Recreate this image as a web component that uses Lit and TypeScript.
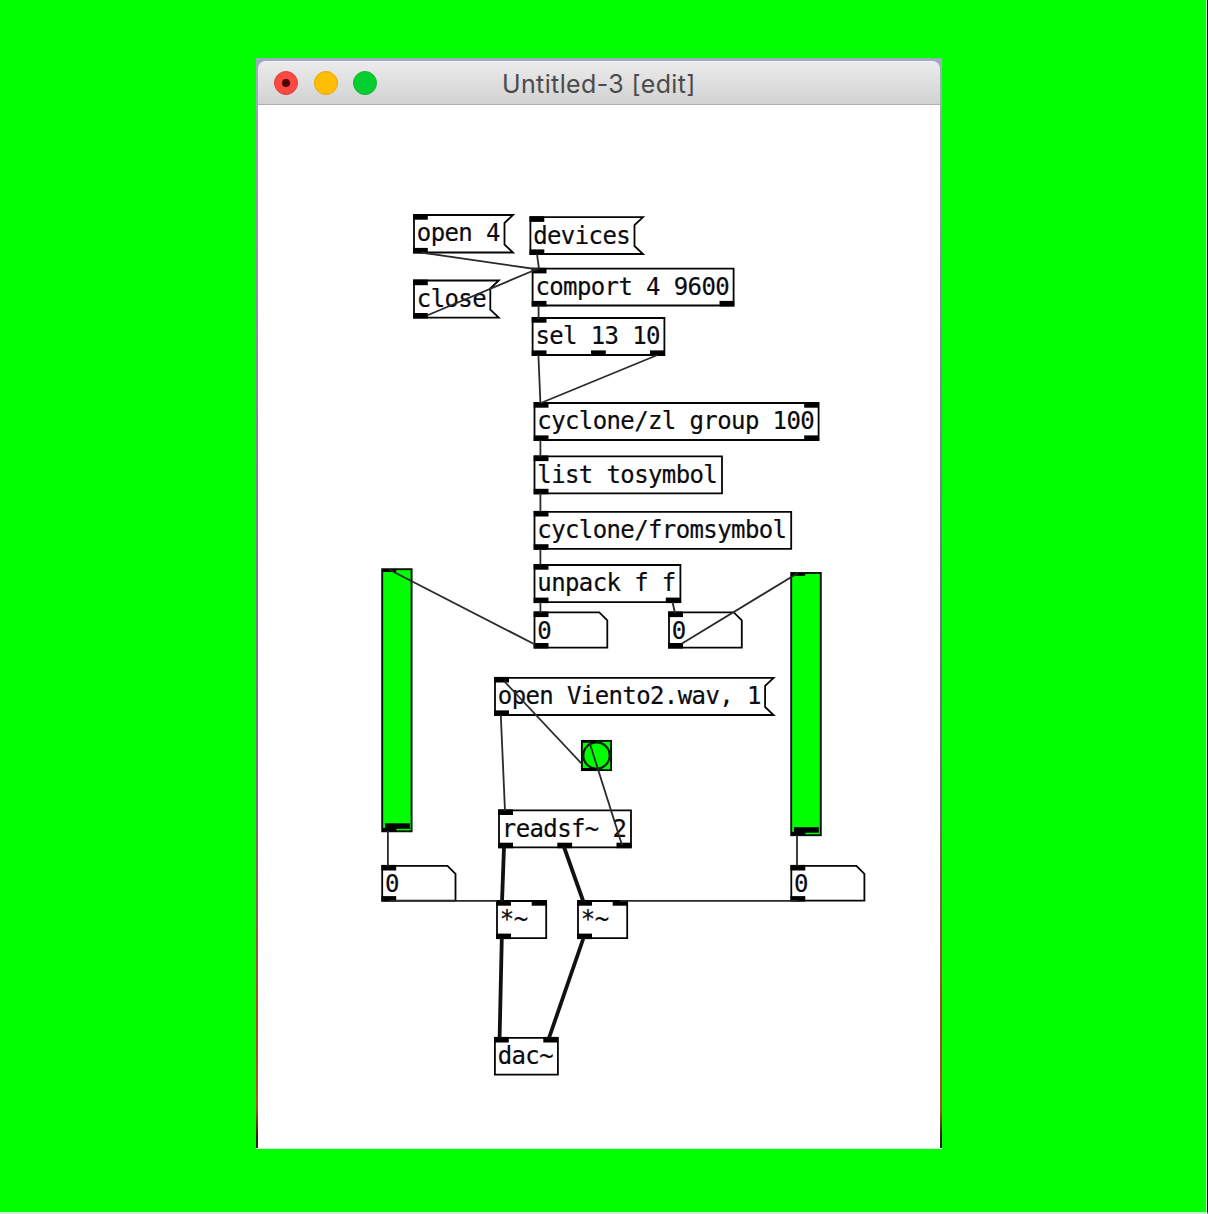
import { LitElement, html, css, svg } from "lit";
import { customElement } from "lit/decorators.js";

type Kind = "object" | "message" | "number";

interface PatchBox {
  kind: Kind;
  text: string;
  x: number;
  y: number;
  right: number;
  bottom: number;
  /** Left edges of the inlets and outlets. */
  inlets: number[];
  outlets: number[];
}

interface Slider {
  x: number;
  y: number;
  right: number;
  bottom: number;
}

type Cord = [number, number, number, number];

const BOXES: PatchBox[] = [
  { kind: "message", text: "open 4", x: 414, y: 215, right: 513, bottom: 252.5, inlets: [413], outlets: [413] },
  { kind: "message", text: "devices", x: 530.4, y: 217.2, right: 643, bottom: 254, inlets: [529.5], outlets: [529.5] },
  { kind: "message", text: "close", x: 414, y: 280.5, right: 498.8, bottom: 317.6, inlets: [413], outlets: [413] },
  { kind: "object", text: "comport 4 9600", x: 532.6, y: 268.7, right: 733.6, bottom: 305.5, inlets: [531.7], outlets: [531.7, 719.5] },
  { kind: "object", text: "sel 13 10", x: 532.6, y: 318, right: 664.4, bottom: 355, inlets: [531.7], outlets: [531.7, 591, 650] },
  { kind: "object", text: "cyclone/zl group 100", x: 534.5, y: 403, right: 818.6, bottom: 440, inlets: [533.7, 804.2], outlets: [533.7, 804.2] },
  { kind: "object", text: "list tosymbol", x: 534.5, y: 456.4, right: 722, bottom: 493.4, inlets: [533.7], outlets: [533.7] },
  { kind: "object", text: "cyclone/fromsymbol", x: 534.5, y: 511.8, right: 791.2, bottom: 548.8, inlets: [533.7], outlets: [533.7] },
  { kind: "object", text: "unpack f f", x: 534.5, y: 565, right: 680.4, bottom: 602.2, inlets: [533.7], outlets: [533.7, 665.8] },
  { kind: "number", text: "0", x: 534.5, y: 612.4, right: 607.3, bottom: 647.6, inlets: [533.7], outlets: [533.7] },
  { kind: "number", text: "0", x: 669, y: 612.4, right: 741.8, bottom: 647.6, inlets: [668.2], outlets: [668.2] },
  { kind: "message", text: "open Viento2.wav, 1", x: 495, y: 677.8, right: 773.6, bottom: 715, inlets: [494.2], outlets: [494.2] },
  { kind: "object", text: "readsf~ 2", x: 499, y: 810.3, right: 631, bottom: 847.3, inlets: [498.2], outlets: [498.2, 557.3, 616.5] },
  { kind: "number", text: "0", x: 382.2, y: 865.8, right: 455.5, bottom: 900.7, inlets: [381.4], outlets: [381.4] },
  { kind: "number", text: "0", x: 791.3, y: 865.8, right: 864.4, bottom: 900.7, inlets: [790.5], outlets: [790.5] },
  { kind: "object", text: "*~", x: 497, y: 901, right: 546.2, bottom: 938.2, inlets: [496.2, 531.7], outlets: [496.2] },
  { kind: "object", text: "*~", x: 578, y: 901, right: 627.2, bottom: 938.2, inlets: [577.2, 612.7], outlets: [577.2] },
  { kind: "object", text: "dac~", x: 494.9, y: 1037.8, right: 557.9, bottom: 1074.6, inlets: [494, 543.3], outlets: [] },
];

const SLIDERS: Slider[] = [
  { x: 382.2, y: 569.2, right: 411.6, bottom: 831.3 },
  { x: 791.2, y: 573, right: 820.8, bottom: 835.2 },
];

const CONTROL_CORDS: Cord[] = [
  [421, 252.5, 538.5, 269.5],
  [537, 254, 539, 269],
  [427, 315.5, 536, 269.5],
  [538.6, 305, 538.6, 319],
  [538.4, 355, 540.4, 403],
  [657.5, 355, 540.8, 403],
  [540.4, 440, 540.4, 457],
  [540.4, 493, 540.4, 512],
  [540.4, 549, 540.4, 565],
  [540.4, 602, 540.4, 613],
  [672.5, 602, 675, 613],
  [535, 644.5, 389, 569.5],
  [682, 643.5, 798, 573],
  [582, 764, 504, 681],
  [500.8, 715, 505, 811],
  [622, 845, 589, 741],
  [387.9, 831, 387.9, 866],
  [797, 835, 797, 866],
  [389, 900.8, 497, 900.8],
  [798, 900.8, 620, 900.8],
];

const SIGNAL_CORDS: Cord[] = [
  [504, 847, 502, 902],
  [564, 847, 583.5, 902],
  [501.8, 938, 499.6, 1038],
  [583.5, 938, 549, 1038],
];

@customElement("patch-canvas")
export class PatchCanvas extends LitElement {
  static styles = css`
    :host {
      display: block;
      background: #fff;
    }
    .patch {
      display: block;
    }
    .outline {
      fill: none;
      stroke: #050505;
      stroke-width: 1.8;
    }
    .port {
      fill: #000;
    }
    .label {
      font-family: "DejaVu Sans Mono", monospace;
      font-size: 24px;
      letter-spacing: -0.61px;
      fill: #0b0b10;
      stroke: #0b0b10;
      stroke-width: 0.2;
      white-space: pre;
    }
    .cord {
      stroke: #2a2a2a;
      stroke-width: 1.8;
    }
    .signal {
      stroke: #111;
      stroke-width: 3.8;
    }
    .green {
      fill: #00ff00;
      stroke: #031003;
      stroke-width: 1.9;
    }
    .ring {
      fill: none;
      stroke: #042004;
      stroke-width: 2.2;
    }
  `;

  private outline(b: PatchBox): string {
    const { x, y, right: r, bottom: d } = b;
    switch (b.kind) {
      case "message":
        return `M${r} ${y}H${x}V${d}H${r}L${r - 8.5} ${d - 8}V${y + 8}Z`;
      case "number":
        return `M${x} ${y}H${r - 8}L${r} ${y + 8}V${d}H${x}Z`;
      default:
        return `M${x} ${y}H${r}V${d}H${x}Z`;
    }
  }

  private box(b: PatchBox) {
    return svg`
      <path class="outline" d=${this.outline(b)} />
      ${b.inlets.map((x) => svg`<rect class="port" x=${x} y=${b.y - 0.9} width="14.8" height="5.6" />`)}
      ${b.outlets.map((x) => svg`<rect class="port" x=${x} y=${b.bottom - 4.6} width="14.8" height="5.5" />`)}
      <text class="label" x=${b.x + 2.8} y=${b.y + 26.4}>${b.text}</text>
    `;
  }

  private slider(s: Slider) {
    return svg`
      <rect class="green" x=${s.x} y=${s.y} width=${s.right - s.x} height=${s.bottom - s.y} />
      <rect class="port" x=${s.x} y=${s.y} width="14" height="2.8" />
      <rect class="port" x=${s.x + 2.8} y=${s.bottom - 8} width="24.8" height="5.5" />
      <rect class="port" x=${s.x} y=${s.bottom - 3.4} width="14.2" height="3.6" />
    `;
  }

  private cords(list: Cord[], name: string) {
    return list.map(([x1, y1, x2, y2]) => svg`<line class=${name} x1=${x1} y1=${y1} x2=${x2} y2=${y2} />`);
  }

  render() {
    return html`
      <svg class="patch" width="682" height="1043" viewBox="258 105 682 1043">
        ${BOXES.map((b) => this.box(b))}
        ${SLIDERS.map((s) => this.slider(s))}
        <rect class="green" x="581.9" y="740.9" width="29.2" height="29.2" />
        <circle class="ring" cx="596.5" cy="755.5" r="13.2" />
        <rect class="port" x="581" y="740" width="15" height="2.8" />
        <rect class="port" x="581" y="768" width="15" height="3" />
        ${this.cords(CONTROL_CORDS, "cord")} ${this.cords(SIGNAL_CORDS, "signal")}
      </svg>
    `;
  }
}

@customElement("app-root")
export class AppRoot extends LitElement {
  static styles = css`
    :host {
      display: flex;
      box-sizing: border-box;
      width: 1208px;
      height: 1214px;
      padding: 58px 0 0 256px;
      align-items: flex-start;
      background: #00ff00;
      border-right: 1px solid #101510;
      border-bottom: 2px solid #c8f5cf;
      box-shadow: inset -1px 0 0 #c8f5cf;
      overflow: hidden;
    }
    .frame {
      box-sizing: border-box;
      width: 686px;
      height: 1091px;
      padding: 3px 2px 0;
      border-bottom: 1px solid #d5f0d8;
      background: linear-gradient(#9eabbc 0 44px, #9a9cab 60px, #77788a 520px, #7a6a68 760px, #a04a20 960px, #a8531f 1050px, #301c10 1080px);
    }
    .title-bar {
      box-sizing: border-box;
      display: flex;
      align-items: center;
      height: 44px;
      border-radius: 8px 8px 0 0;
      border-top: 1px solid #f5f5f5;
      border-bottom: 1px solid #b0b0b0;
      background: linear-gradient(#ebebeb, #d2d2d2);
    }
    .lights {
      display: flex;
      gap: 15.5px;
      padding: 0 0 0 16px;
      width: 228px;
    }
    .light {
      box-sizing: border-box;
      width: 24px;
      height: 24px;
      border-radius: 50%;
    }
    .close {
      display: grid;
      place-items: center;
      background: #fc4842;
      border: 1px solid #e2403a;
    }
    .close::after {
      content: "";
      width: 8px;
      height: 8px;
      border-radius: 50%;
      background: #4d0000;
    }
    .minimise {
      background: #ffbd04;
      border: 1px solid #e6a60f;
    }
    .zoom {
      background: #05cf30;
      border: 1px solid #10b52c;
    }
    .title {
      font: 25px/32px Inter, sans-serif;
      letter-spacing: 0.37px;
      color: #4b4b4d;
      white-space: pre;
      padding-top: 2px;
    }
  `;

  render() {
    return html`
      <div class="frame">
        <div class="title-bar">
          <div class="lights">
            <span class="light close"></span>
            <span class="light minimise"></span>
            <span class="light zoom"></span>
          </div>
          <span class="title">Untitled-3 [edit]</span>
        </div>
        <patch-canvas></patch-canvas>
      </div>
    `;
  }
}
